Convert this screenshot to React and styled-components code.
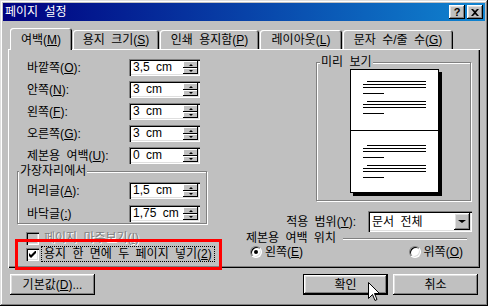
import React from 'react';
import styled, { createGlobalStyle, css } from 'styled-components';

const GlobalStyle = createGlobalStyle`
  html, body { margin: 0; padding: 0; background: #c0c0c0; }
  body {
    font-family: "Liberation Sans", "Noto Sans CJK KR", sans-serif;
    font-size: 12px;
  }
  *, *::before, *::after { box-sizing: border-box; }
`;

const raised = css`
  box-shadow: inset -1px -1px #000, inset 1px 1px #fff, inset -2px -2px #808080, inset 2px 2px #dfdfdf;
`;
const sunken = css`
  box-shadow: inset 1px 1px #808080, inset 2px 2px #000, inset -1px -1px #fff, inset -2px -2px #dfdfdf;
`;

const Window = styled.div`
  position: relative;
  width: 488px;
  height: 306px;
  padding: 3px;
  background: #c0c0c0;
  box-shadow: inset -1px -1px #000, inset 1px 1px #dfdfdf, inset -2px -2px #808080, inset 2px 2px #fff;
  display: flex;
  flex-direction: column;
  font-size: 12px;
  line-height: 12px;
  word-spacing: 3px;
  color: #000;
  overflow: hidden;
`;

const TitleBar = styled.div`
  height: 18px;
  display: flex;
  align-items: center;
  padding: 0 2px;
  background: linear-gradient(90deg, #000080 0%, #1084d0 100%);
  color: #fff;
`;
const Title = styled.span`
  flex: 1;
`;
const TitleButtons = styled.div`
  display: flex;
  gap: 2px;
`;
const TitleButton = styled.div`
  width: 16px;
  height: 14px;
  background: #c0c0c0;
  ${raised};
  display: flex;
  align-items: center;
  justify-content: center;
  color: #000;
  font-weight: bold;
  font-size: 11px;
  line-height: 11px;
  font-family: "Liberation Sans", sans-serif;
`;

const Body = styled.div`
  padding: 0 5px;
  display: flex;
  flex-direction: column;
`;

const TabRow = styled.div`
  position: relative;
  z-index: 1;
  display: flex;
  align-items: flex-end;
  gap: 1px;
  height: 21px;
  margin-top: 7px;
  padding-left: 2px;
`;
const Tab = styled.div`
  position: relative;
  width: ${(p) => p.$w}px;
  height: ${(p) => (p.$active ? 22 : 19)}px;
  margin-bottom: ${(p) => (p.$active ? -1 : 0)}px;
  padding-top: ${(p) => (p.$active ? 6 : 4)}px;
  text-align: center;
  white-space: nowrap;
  background: #c0c0c0;
  border-radius: 3px 3px 0 0;
  box-shadow: inset 1px 1px #fff, inset -1px 0 #000, inset -2px 0 #808080;
`;

const Panel = styled.div`
  height: 219px;
  padding: 10px 8px 0 9px;
  display: flex;
  box-shadow: inset 1px 1px #fff, inset -1px -1px #000, inset -2px -2px #808080;
`;

const LeftCol = styled.div`
  width: 190px;
  display: flex;
  flex-direction: column;
`;
const RightCol = styled.div`
  width: 226px;
  margin-left: 39px;
  display: flex;
  flex-direction: column;
`;

const FieldList = styled.div`
  display: flex;
  flex-direction: column;
  gap: ${(p) => p.$gap}px;
  padding-left: ${(p) => p.$indent}px;
`;
const FieldRow = styled.div`
  display: grid;
  grid-template-columns: 102px 71px;
  align-items: center;
  height: 17px;
`;
const Label = styled.span`
  white-space: nowrap;
`;
const Acc = styled.u`
  text-decoration: underline;
  text-underline-offset: 1px;
`;

const SpinBox = styled.div`
  display: flex;
  height: 17px;
  padding: 2px;
  background: #fff;
  ${sunken};
`;
const SpinText = styled.span`
  flex: 1;
  padding-left: 2px;
  line-height: 13px;
  white-space: nowrap;
`;
const SpinButtons = styled.div`
  width: 15px;
  display: grid;
  grid-template-rows: 7px 6px;
`;
const SpinHalf = styled.div`
  background: #c0c0c0;
  box-shadow: inset -1px -1px #000, inset 1px 1px #fff;
  display: flex;
  align-items: center;
  justify-content: center;
`;
const Arrow = styled.span`
  width: 0;
  height: 0;
  border-left: ${(p) => p.$size}px solid transparent;
  border-right: ${(p) => p.$size}px solid transparent;
  ${(p) =>
    p.$up
      ? `border-bottom: ${Math.ceil(p.$size / 1.5)}px solid #000;`
      : `border-top: ${Math.ceil(p.$size / 1.5)}px solid #000;`}
`;

const Group = styled.div`
  position: relative;
  margin-top: 7px;
  width: 190px;
  border: 1px solid #808080;
  box-shadow: inset 1px 1px #fff, 1px 1px #fff;
  padding: 10px 0 1px 9px;
`;
const GroupTitle = styled.span`
  position: absolute;
  top: -7px;
  left: ${(p) => p.$left}px;
  padding: 0 1px;
  background: #c0c0c0;
  line-height: 12px;
  white-space: nowrap;
`;

const CheckList = styled.div`
  margin-top: 6px;
  padding-left: 9px;
  display: flex;
  flex-direction: column;
`;
const CheckRow = styled.div`
  height: 16px;
  display: flex;
  align-items: center;
`;
const CheckBox = styled.span`
  width: 13px;
  height: 13px;
  flex: none;
  background: ${(p) => (p.$disabled ? '#c0c0c0' : '#fff')};
  ${sunken};
  display: flex;
  align-items: center;
  justify-content: center;
`;
const CheckLabel = styled.span`
  margin-left: 2px;
  padding: 1px 2px 1px 2px;
  border: 1px dotted ${(p) => (p.$focus ? '#000' : 'transparent')};
  white-space: nowrap;
  color: ${(p) => (p.$disabled ? '#808080' : '#000')};
  text-shadow: ${(p) => (p.$disabled ? '1px 1px #fff' : 'none')};
`;

const PreviewFrame = styled.div`
  position: relative;
  margin-top: 3px;
  margin-left: 70px;
  width: 155px;
  height: 139px;
  border: 1px solid #808080;
  box-shadow: inset 1px 1px #fff, 1px 1px #fff;
  padding: 6px 0 0 33px;
`;

const ScopeRow = styled.div`
  margin-top: 10px;
  display: flex;
  align-items: center;
  justify-content: flex-end;
  gap: 12px;
`;
const Select = styled.div`
  width: 104px;
  height: 21px;
  padding: 2px;
  display: flex;
  align-items: center;
  background: #fff;
  ${sunken};
`;
const SelectText = styled.span`
  flex: 1;
  padding-left: 2px;
  white-space: nowrap;
`;
const DropButton = styled.div`
  width: 16px;
  height: 17px;
  background: #c0c0c0;
  ${raised};
  display: flex;
  align-items: center;
  justify-content: center;
`;

const SectionHeader = styled.div`
  height: 12px;
  display: flex;
  align-items: center;
`;
const SectionLine = styled.span`
  flex: 1;
  margin: 1px 5px 0 7px;
  height: 2px;
  border-top: 1px solid #808080;
  border-bottom: 1px solid #fff;
`;

const RadioRow = styled.div`
  margin-top: 2px;
  height: 12px;
  display: flex;
  align-items: center;
  padding: 0 9px 0 4px;
`;
const RadioItem = styled.div`
  display: flex;
  align-items: center;
  gap: 3px;
  margin-left: ${(p) => (p.$push ? 'auto' : '0')};
`;
const Radio = styled.span`
  width: 12px;
  height: 12px;
  border-radius: 50%;
  background: #fff;
  border: 1px solid;
  border-color: #808080 #fff #fff #808080;
  box-shadow: inset 1px 1px #000, inset -1px -1px #dfdfdf;
  display: flex;
  align-items: center;
  justify-content: center;
  &::after {
    content: '';
    width: 4px;
    height: 4px;
    border-radius: 50%;
    background: #000;
    display: ${(p) => (p.$checked ? 'block' : 'none')};
  }
`;

const ButtonRow = styled.div`
  margin-top: 6px;
  padding: 0 2px;
  display: flex;
  gap: 5px;
`;
const Button = styled.div`
  width: 85px;
  height: 21px;
  margin-left: ${(p) => (p.$push ? 'auto' : '0')};
  background: #c0c0c0;
  display: flex;
  align-items: center;
  justify-content: center;
  white-space: nowrap;
  ${(p) =>
    p.$default
      ? css`
          box-shadow: inset 0 0 0 1px #000, inset -2px -2px #000, inset 2px 2px #fff,
            inset -3px -3px #808080, inset 3px 3px #dfdfdf;
        `
      : raised};
`;

const Annotation = styled.div`
  position: absolute;
  left: 15px;
  top: 239px;
  width: 207px;
  height: 31px;
  border: 3px solid #ff0000;
  pointer-events: none;
`;
const Cursor = styled.svg`
  position: absolute;
  left: 368px;
  top: 282px;
`;

function Spin({ value }) {
  return (
    <SpinBox>
      <SpinText>{value}</SpinText>
      <SpinButtons>
        <SpinHalf>
          <Arrow $up $size={2} />
        </SpinHalf>
        <SpinHalf>
          <Arrow $size={2} />
        </SpinHalf>
      </SpinButtons>
    </SpinBox>
  );
}

function Preview() {
  const para = (y0) => [
    <line key={`a${y0}`} x1="17" x2="76" y1={y0 + 0.5} y2={y0 + 0.5} />,
    <line key={`b${y0}`} x1="13" x2="76" y1={y0 + 3.5} y2={y0 + 3.5} />,
    <line key={`c${y0}`} x1="13" x2="76" y1={y0 + 6.5} y2={y0 + 6.5} />,
    <line key={`d${y0}`} x1="13" x2="34" y1={y0 + 12.5} y2={y0 + 12.5} />,
  ];
  return (
    <svg width="92" height="127" viewBox="0 0 92 127">
      <rect x="3" y="3" width="89" height="124" fill="#000" />
      <rect x="0.5" y="0.5" width="88" height="123" fill="#fff" stroke="#000" />
      <line x1="0" x2="89" y1="61.5" y2="61.5" stroke="#000" />
      <g stroke="#000" strokeWidth="1">
        {para(12)}
        {para(32)}
        {para(76)}
        {para(96)}
      </g>
    </svg>
  );
}

const topFields = [
  ['바깥쪽(', 'O', '):', '3,5 cm'],
  ['안쪽(', 'N', '):', '3 cm'],
  ['왼쪽(', 'F', '):', '3 cm'],
  ['오른쪽(', 'G', '):', '3 cm'],
  ['제본용 여백(', 'U', '):', '0 cm'],
];
const edgeFields = [
  ['머리글(', 'A', '):', '1,5 cm'],
  ['바닥글(', ':', ')', '1,75 cm'],
];
const tabs = [
  ['여백(', 'M', ')', 62, true],
  ['용지 크기(', 'S', ')', 86],
  ['인쇄 용지함(', 'P', ')', 99],
  ['레이아웃(', 'L', ')', 82],
  ['문자 수/줄 수(', 'G', ')', 110],
];

export default function App() {
  return (
    <>
      <GlobalStyle />
      <Window>
        <TitleBar>
          <Title>페이지 설정</Title>
          <TitleButtons>
            <TitleButton>?</TitleButton>
            <TitleButton>
              <svg width="8" height="7" viewBox="0 0 8 7">
                <path d="M0 0h2l2 2l2 -2h2l-3 3.5l3 3.5h-2l-2 -2l-2 2h-2l3 -3.5z" fill="#000" />
              </svg>
            </TitleButton>
          </TitleButtons>
        </TitleBar>
        <Body>
          <TabRow>
            {tabs.map(([a, k, b, w, active]) => (
              <Tab key={a} $w={w} $active={active}>
                {a}
                <Acc>{k}</Acc>
                {b}
              </Tab>
            ))}
          </TabRow>
          <Panel>
            <LeftCol>
              <FieldList $gap={5} $indent={10}>
                {topFields.map(([a, k, b, v]) => (
                  <FieldRow key={a}>
                    <Label>
                      {a}
                      <Acc>{k}</Acc>
                      {b}
                    </Label>
                    <Spin value={v} />
                  </FieldRow>
                ))}
              </FieldList>
              <Group>
                <GroupTitle $left={1}>가장자리에서</GroupTitle>
                <FieldList $gap={6} $indent={0}>
                  {edgeFields.map(([a, k, b, v]) => (
                    <FieldRow key={a}>
                      <Label>
                        {a}
                        <Acc>{k}</Acc>
                        {b}
                      </Label>
                      <Spin value={v} />
                    </FieldRow>
                  ))}
                </FieldList>
              </Group>
              <CheckList>
                <CheckRow>
                  <CheckBox $disabled />
                  <CheckLabel $disabled>
                    페이지 마주보기(<Acc>I</Acc>)
                  </CheckLabel>
                </CheckRow>
                <CheckRow>
                  <CheckBox>
                    <svg width="7" height="7" viewBox="0 0 7 7">
                      <path d="M0 2L2 4L7 -1V2L2 7L0 5Z" fill="#000" />
                    </svg>
                  </CheckBox>
                  <CheckLabel $focus>
                    용지 한 면에 두 페이지 넣기(<Acc>2</Acc>)
                  </CheckLabel>
                </CheckRow>
              </CheckList>
            </LeftCol>
            <RightCol>
              <PreviewFrame>
                <GroupTitle $left={3}>미리 보기</GroupTitle>
                <Preview />
              </PreviewFrame>
              <ScopeRow>
                <Label>
                  적용 범위(<Acc>Y</Acc>):
                </Label>
                <Select>
                  <SelectText>문서 전체</SelectText>
                  <DropButton>
                    <Arrow $size={4} />
                  </DropButton>
                </Select>
              </ScopeRow>
              <SectionHeader>
                <Label>제본용 여백 위치</Label>
                <SectionLine />
              </SectionHeader>
              <RadioRow>
                <RadioItem>
                  <Radio $checked />
                  <Label>
                    왼쪽(<Acc>E</Acc>)
                  </Label>
                </RadioItem>
                <RadioItem $push>
                  <Radio />
                  <Label>
                    위쪽(<Acc>O</Acc>)
                  </Label>
                </RadioItem>
              </RadioRow>
            </RightCol>
          </Panel>
          <ButtonRow>
            <Button>
              기본값(<Acc>D</Acc>)...
            </Button>
            <Button $push $default>
              확인
            </Button>
            <Button>취소</Button>
          </ButtonRow>
        </Body>
        <Annotation />
        <Cursor width="12" height="20" viewBox="0 0 12 20">
          <path
            d="M0.5 0.5 L0.5 16.5 L4.5 12.5 L7 18.5 L9 17.5 L6.5 11.5 L11.5 11.5 Z"
            fill="#fff"
            stroke="#000"
            strokeWidth="1"
          />
        </Cursor>
      </Window>
    </>
  );
}
